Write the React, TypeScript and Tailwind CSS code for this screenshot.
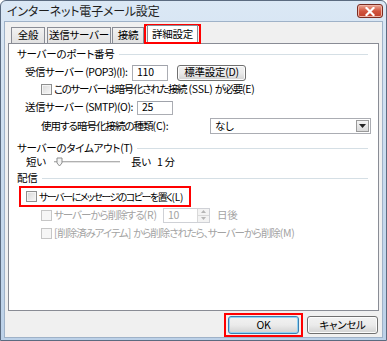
// Outlook "インターネット電子メール設定" dialog, 詳細設定 tab, Windows 7 basic look.

const FONT = "font-['Noto_Sans_CJK_JP','Noto_Sans',sans-serif] [font-feature-settings:'palt']";

// Latin runs keep normal spacing; the condensed tracking is only for the kana/kanji around them.
function Lat({ children }: { children: string }) {
  return <span className="whitespace-pre tracking-[-0.2px]">{children}</span>;
}

function Check({ disabled = false }: { disabled?: boolean }) {
  return (
    <span
      className={
        disabled
          ? "box-border inline-block h-[11px] w-[11px] shrink-0 border border-[#c6c6c6] bg-[#f6f6f6]"
          : "box-border inline-block h-[11px] w-[11px] shrink-0 border border-[#8e8f8f] bg-gradient-to-br from-[#d8d8d8] to-[#f8f8f8] shadow-[inset_0_0_0_1px_#f4f4f4]"
      }
    />
  );
}

function Header({ label }: { label: string }) {
  return (
    <div className="flex h-[14px] items-center pl-[8px] pr-[10px]">
      <span className="whitespace-nowrap">{label}</span>
      <span className="ml-[4px] h-px flex-1 bg-[#d5dfe5]" />
    </div>
  );
}

function TextBox({ value, className }: { value: string; className: string }) {
  return (
    <span
      className={`box-border flex items-center border border-[#abadb3] border-t-[#a0a3ab] bg-white pl-[4px] ${className}`}
    >
      {value}
    </span>
  );
}

function WinButton({ label, className, primary = false }: { label: string; className: string; primary?: boolean }) {
  return (
    <span
      className={
        "box-border flex items-center justify-center rounded-[3px] border bg-gradient-to-b from-[#f2f2f2] via-[#ebebeb] to-[#d2d2d2] " +
        (primary
          ? "border-[#3c7fb1] shadow-[inset_0_0_0_1px_#8fd3f5] "
          : "border-[#707070] shadow-[inset_0_0_0_1px_#fcfcfc] ") +
        className
      }
    >
      {label}
    </span>
  );
}

function Tab({ label, className }: { label: string; className: string }) {
  return (
    <span
      className={`box-border flex h-[16px] items-center justify-center whitespace-nowrap border border-b-0 border-[#898c95] bg-gradient-to-b from-[#f2f2f2] to-[#e1e1e1] ${className}`}
    >
      {label}
    </span>
  );
}

export default function App() {
  return (
    <div
      className={`${FONT} box-border flex h-[341px] w-[387px] flex-col overflow-hidden rounded-t-[6px] border border-[#5b6b80] bg-gradient-to-b from-[#dbe8f5] via-[#c9dbee] to-[#bcd1e8] text-[10.5px] leading-none tracking-[-0.25px] text-black`}
    >
      {/* title bar */}
      <div className="flex h-[20px] shrink-0 items-center pl-[6px] pr-[3px]">
        <span className="text-[12px] tracking-[-0.2px] text-[#1e1e1e]">インターネット電子メール設定</span>
        <span className="ml-auto flex h-[14px] w-[26px] items-center justify-center rounded-[3px] border border-[#7a2c22] bg-gradient-to-b from-[#e9a898] via-[#d2553f] to-[#c0402b] shadow-[inset_0_0_0_1px_#f0b4a6]">
          <svg width="10" height="9" viewBox="0 0 10 9">
            <path d="M1.5 1 L8.5 8 M8.5 1 L1.5 8" stroke="#fff" strokeWidth="2.2" strokeLinecap="square" />
          </svg>
        </span>
      </div>

      {/* client */}
      <div className="mx-[3px] mb-[3px] flex flex-1 flex-col border border-[#9fb2c8] bg-[#f0f0f0]">
        {/* tabs */}
        <div className="flex h-[21px] items-end pl-[6px]">
          <Tab label="全般" className="w-[34px]" />
          <Tab label="送信サーバー" className="ml-[2px] w-[64px]" />
          <Tab label="接続" className="ml-[1px] w-[32px]" />
          <span className="relative z-10 -mb-px flex h-[20px] w-[57px] items-end border-2 border-[#ff0000] px-[1px]">
            <span className="box-border flex h-[17px] w-full items-center justify-center border border-b-0 border-[#898c95] bg-white">
              詳細設定
            </span>
          </span>
        </div>

        {/* panel */}
        <div className="mx-[3px] box-border flex h-[268px] flex-col border border-[#898c95] bg-white pt-[3px]">
          <Header label="サーバーのポート番号" />

          <div className="mt-[3px] flex h-[17px] items-center pl-[16px]">
            <span className="w-[107px] whitespace-nowrap tracking-[-0.5px]">受信サーバー (POP3)(I):</span>
            <TextBox value="110" className="h-[16px] w-[36px]" />
            <WinButton label="標準設定(D)" className="ml-[9px] h-[16px] w-[69px]" />
          </div>

          <div className="mt-[2px] flex h-[12px] items-center pl-[32px]">
            <Check />
            <span className="ml-[2px] whitespace-nowrap tracking-[-1.35px]">
              このサーバーは暗号化された接続<Lat>{" (SSL) "}</Lat>が必要<Lat>(E)</Lat>
            </span>
          </div>

          <div className="mt-[5px] flex h-[15px] items-center pl-[16px]">
            <span className="w-[112px] whitespace-nowrap tracking-[-0.5px]">送信サーバー (SMTP)(O):</span>
            <TextBox value="25" className="h-[14px] w-[36px]" />
          </div>

          <div className="mt-[3px] flex h-[16px] items-center pl-[32px] pr-[7px]">
            <span className="w-[169px] whitespace-nowrap tracking-[-1px]">
              使用する暗号化接続の種類<Lat>(C):</Lat>
            </span>
            <span className="box-border flex h-[16px] flex-1 items-center border border-[#abadb3] bg-white pl-[4px]">
              なし
              <span className="ml-auto mr-px box-border flex h-[12px] w-[13px] items-center justify-center border border-[#9a9a9a] bg-gradient-to-b from-[#f4f4f4] to-[#d9d9d9]">
                <svg width="7" height="4" viewBox="0 0 7 4">
                  <path d="M0 0 H7 L3.5 4 Z" fill="#222" />
                </svg>
              </span>
            </span>
          </div>

          <div className="mt-[7px]">
            <Header label="サーバーのタイムアウト(T)" />
          </div>

          <div className="flex h-[14px] items-center pl-[17px]">
            <span className="w-[28px]">短い</span>
            <svg width="66" height="10" viewBox="0 0 66 10" className="shrink-0">
              <rect x="0" y="4" width="66" height="2" fill="#e3e3e3" />
              <rect x="0" y="4" width="66" height="1" fill="#b0b0b0" />
              <path d="M3 1 H8 V6 L5.5 9 L3 6 Z" fill="#f4f4f4" stroke="#8e8f8f" strokeWidth="1" />
            </svg>
            <span className="ml-[11px]">長い</span>
            <span className="ml-[6px]">1 分</span>
          </div>

          <div className="mt-[2px]">
            <Header label="配信" />
          </div>

          <div className="ml-[10px] mt-[1px] flex h-[21px] w-[172px] items-center border-2 border-[#ff0000] pl-[5px]">
            <Check />
            <span className="ml-[2px] whitespace-nowrap text-[10px] tracking-[-1.5px]">
              サーバーにメッセージのコピーを置く<Lat>(L)</Lat>
            </span>
          </div>

          <div className="mt-[1px] flex h-[14px] items-center pl-[32px] text-[#a3a3a3]">
            <Check disabled />
            <span className="ml-[2px] w-[109px] whitespace-nowrap tracking-[-1px]">
              サーバーから削除する<Lat>(R)</Lat>
            </span>
            <span className="box-border flex h-[15px] w-[47px] items-center border border-[#cfd1d6] pl-[4px]">
              10
              <span className="ml-auto flex h-full w-[12px] flex-col border-l border-[#d9d9d9]">
                <span className="flex flex-1 items-center justify-center border-b border-[#d9d9d9] bg-[#f3f3f3]">
                  <svg width="5" height="3" viewBox="0 0 5 3">
                    <path d="M0 3 H5 L2.5 0 Z" fill="#b5b5b5" />
                  </svg>
                </span>
                <span className="flex flex-1 items-center justify-center bg-[#f3f3f3]">
                  <svg width="5" height="3" viewBox="0 0 5 3">
                    <path d="M0 0 H5 L2.5 3 Z" fill="#b5b5b5" />
                  </svg>
                </span>
              </span>
            </span>
            <span className="ml-[7px]">日後</span>
          </div>

          <div className="mt-[4px] flex h-[14px] items-center pl-[32px] text-[#a3a3a3]">
            <Check disabled />
            <span className="ml-[2px] whitespace-nowrap tracking-[-1.1px]">
              <Lat>[</Lat>削除済みアイテム<Lat>{"] "}</Lat>から削除されたら、サーバーから削除<Lat>(M)</Lat>
            </span>
          </div>
        </div>

        {/* buttons */}
        <div className="mt-[2px] flex items-center justify-end pr-[4px]">
          <span className="flex h-[24px] w-[79px] items-center justify-center border-2 border-[#ff0000]">
            <WinButton label="OK" primary className="h-[18px] w-[71px]" />
          </span>
          <WinButton label="キャンセル" className="ml-[4px] h-[18px] w-[71px]" />
        </div>
      </div>
    </div>
  );
}
